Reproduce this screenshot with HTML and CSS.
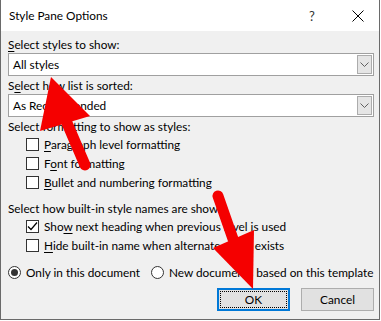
FILE: index.html
```html
<!DOCTYPE html>
<html lang="en">
<head>
    <meta charset="UTF-8">
    <title>Style Pane Options</title>
    <link rel="stylesheet" href="styles.css">
</head>
<body>
    <div class="dialog">
        <div class="titlebar">
            <span class="title">Style Pane Options</span>
            <span class="help">?</span>
            <svg class="close" width="12" height="12" viewBox="0 0 12 12">
                <path d="M0.5 0.5 L11.5 11.5 M11.5 0.5 L0.5 11.5" stroke="#000" stroke-width="1" fill="none"/>
            </svg>
        </div>

        <div class="content">
            <div class="label"><u>S</u>elect styles to show:</div>
            <div class="select">
                <span class="value">All styles</span>
                <span class="drop"><svg width="9" height="5" viewBox="0 0 9 5"><path d="M0.5 0.5 L4.5 4.5 L8.5 0.5" stroke="#606060" fill="none"/></svg></span>
            </div>

            <div class="label gap">S<u>e</u>lect how list is sorted:</div>
            <div class="select">
                <span class="value">As Recommended</span>
                <span class="drop"><svg width="9" height="5" viewBox="0 0 9 5"><path d="M0.5 0.5 L4.5 4.5 L8.5 0.5" stroke="#606060" fill="none"/></svg></span>
            </div>

            <div class="label gap">Select formatting to show as styles:</div>
            <div class="checks">
                <div class="row"><span class="box"></span><span><u>P</u>aragraph level formatting</span></div>
                <div class="row"><span class="box"></span><span>F<u>o</u>nt formatting</span></div>
                <div class="row"><span class="box"></span><span><u>B</u>ullet and numbering formatting</span></div>
            </div>

            <div class="label section">Select how built-in style names are shown:</div>
            <div class="checks">
                <div class="row"><span class="box"><svg width="11" height="11" viewBox="0 0 11 11"><path d="M1 5.5 L4 8.5 L10 1.5" stroke="#000" stroke-width="1.2" fill="none"/></svg></span><span>Sho<u>w</u> next heading when previous level is used</span></div>
                <div class="row"><span class="box"></span><span><u>H</u>ide built-in name when alternate name exists</span></div>
            </div>

            <div class="radios">
                <div class="radio-item first"><span class="radio on"></span><span>Only in this document</span></div>
                <div class="radio-item"><span class="radio"></span><span>New documents based on this template</span></div>
            </div>

            <div class="buttons">
                <button class="btn default"><span class="focus">OK</span></button>
                <button class="btn">Cancel</button>
            </div>
        </div>

        <svg class="arrows" width="381" height="321" viewBox="0 0 381 321">
            <line x1="66" y1="123" x2="84" y2="165" stroke="#f50000" stroke-width="11" stroke-linecap="round"/>
            <polygon points="50,77 39,131 89,116" fill="#f50000"/>
            <line x1="217" y1="196" x2="232" y2="239" stroke="#f50000" stroke-width="11" stroke-linecap="round"/>
            <polygon points="212,248 253,230 252,289" fill="#f50000"/>
        </svg>
    </div>
</body>
</html>
```

FILE: styles.css
```css
body {
    margin: 0;
    font-family: Lato, "Noto Sans", sans-serif;
    font-size: 11.8px;
    color: #000;
    background: #fff;
}
.dialog {
    position: relative;
    width: 378px;
    height: 319px;
    background-color: #f0f0f0;
    border: 1px solid #6a6a6a;
    border-top: none;
    overflow: hidden;
}
.titlebar {
    height: 31px;
    background-color: #fff;
    display: flex;
    align-items: center;
    padding-left: 8px;
}
.title {
    flex: 1;
}
.help {
    width: 8px;
    margin-right: 35px;
    font-size: 13px;
    color: #333;
}
.close {
    margin-right: 15px;
}
.content {
    padding: 6px 5px 0 7px;
}
.label {
    line-height: 15px;
    height: 15px;
    margin-bottom: 1px;
    white-space: nowrap;
}
.label.gap {
    margin-top: 2px;
}
.label.section {
    margin-top: 9px;
}
u {
    text-decoration-thickness: 1px;
    text-underline-offset: 2px;
}
.select {
    height: 21px;
    border: 1px solid #a0a0a0;
    background-color: #fff;
    display: flex;
    align-items: center;
}
.select .value {
    flex: 1;
    padding-left: 4px;
}
.drop {
    width: 15px;
    height: 19px;
    margin-right: 1px;
    background-color: #e5e5e5;
    border: 1px solid #acacac;
    box-sizing: border-box;
    display: flex;
    align-items: center;
    justify-content: center;
}
.checks {
    padding-left: 18px;
}
.row {
    height: 19px;
    display: flex;
    align-items: center;
    white-space: nowrap;
}
.box {
    width: 11px;
    height: 11px;
    border: 1px solid #333;
    background-color: #fff;
    margin-right: 5px;
    display: flex;
    flex-shrink: 0;
}
.radios {
    margin-top: 8px;
    height: 19px;
    display: flex;
    align-items: center;
    white-space: nowrap;
}
.radio-item {
    display: flex;
    align-items: center;
}
.radio-item.first {
    margin-right: 11px;
}
.radio {
    width: 11px;
    height: 11px;
    border: 1px solid #333;
    border-radius: 50%;
    background-color: #fff;
    margin-right: 5px;
    position: relative;
    flex-shrink: 0;
}
.radio.on::after {
    content: "";
    position: absolute;
    left: 2px;
    top: 2px;
    width: 7px;
    height: 7px;
    border-radius: 50%;
    background-color: #333;
}
.buttons {
    margin-top: 6px;
    display: flex;
    justify-content: flex-end;
    gap: 11px;
}
.btn {
    width: 73px;
    height: 23px;
    font-family: inherit;
    font-size: 11.8px;
    background-color: #e1e1e1;
    border: 1px solid #adadad;
    padding: 0;
}
.btn.default {
    border: 2px solid #0078d7;
    padding: 1px;
}
.focus {
    display: flex;
    align-items: center;
    justify-content: center;
    height: 100%;
    border: 1px dotted #000;
    box-sizing: border-box;
}
.arrows {
    position: absolute;
    left: 0;
    top: 0;
    pointer-events: none;
}
```
